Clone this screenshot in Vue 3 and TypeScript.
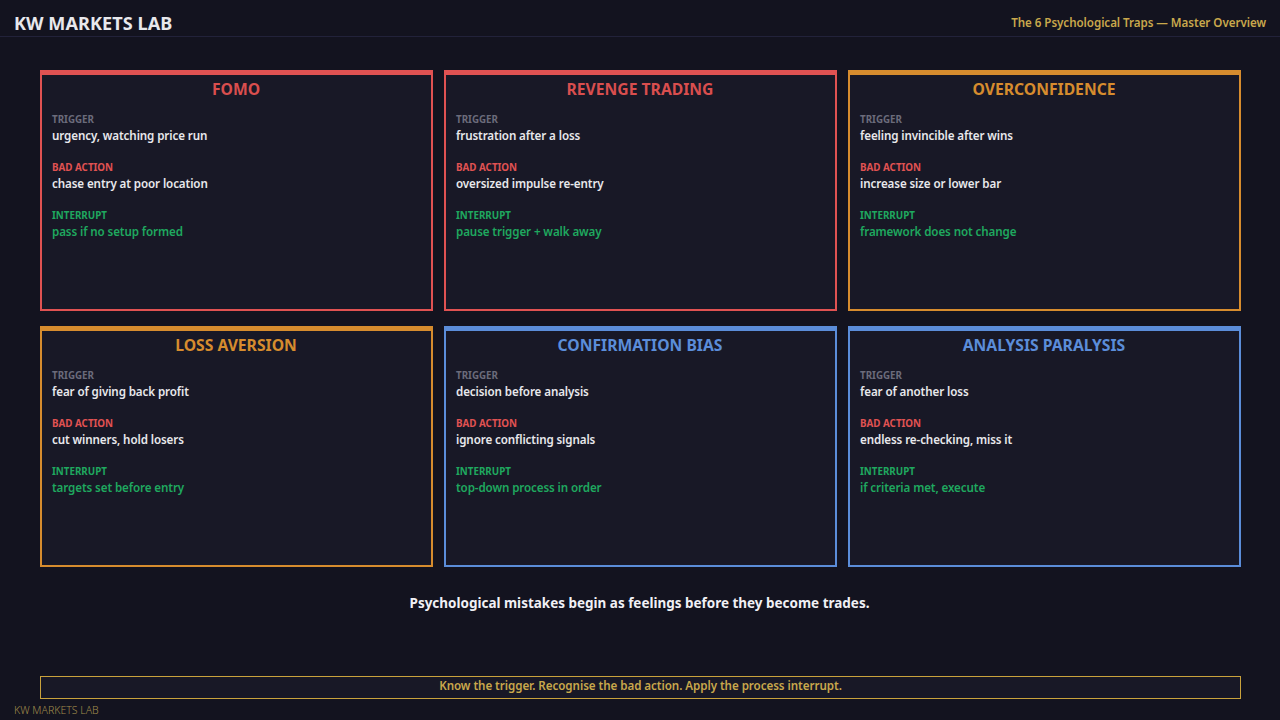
<template>
  <div class="page">
    <header class="top-bar">
      <div class="brand">KW MARKETS LAB</div>
      <div class="subtitle">The 6 Psychological Traps — Master Overview</div>
    </header>

    <main class="content">
      <section class="grid">
        <article v-for="trap in traps" :key="trap.title" class="card" :class="trap.tone">
          <h2 class="card-title">{{ trap.title }}</h2>
          <div class="field">
            <div class="label label-trigger">TRIGGER</div>
            <div class="value">{{ trap.trigger }}</div>
          </div>
          <div class="field">
            <div class="label label-bad">BAD ACTION</div>
            <div class="value">{{ trap.bad }}</div>
          </div>
          <div class="field">
            <div class="label label-interrupt">INTERRUPT</div>
            <div class="value value-interrupt">{{ trap.interrupt }}</div>
          </div>
        </article>
      </section>

      <p class="summary">Psychological mistakes begin as feelings before they become trades.</p>

      <div class="callout">Know the trigger. Recognise the bad action. Apply the process interrupt.</div>
    </main>

    <footer class="footer">KW MARKETS LAB</footer>
  </div>
</template>

<script setup lang="ts">
interface Trap {
  title: string
  tone: 'red' | 'orange' | 'blue'
  trigger: string
  bad: string
  interrupt: string
}

const traps: Trap[] = [
  {
    title: 'FOMO',
    tone: 'red',
    trigger: 'urgency, watching price run',
    bad: 'chase entry at poor location',
    interrupt: 'pass if no setup formed',
  },
  {
    title: 'REVENGE TRADING',
    tone: 'red',
    trigger: 'frustration after a loss',
    bad: 'oversized impulse re-entry',
    interrupt: 'pause trigger + walk away',
  },
  {
    title: 'OVERCONFIDENCE',
    tone: 'orange',
    trigger: 'feeling invincible after wins',
    bad: 'increase size or lower bar',
    interrupt: 'framework does not change',
  },
  {
    title: 'LOSS AVERSION',
    tone: 'orange',
    trigger: 'fear of giving back profit',
    bad: 'cut winners, hold losers',
    interrupt: 'targets set before entry',
  },
  {
    title: 'CONFIRMATION BIAS',
    tone: 'blue',
    trigger: 'decision before analysis',
    bad: 'ignore conflicting signals',
    interrupt: 'top-down process in order',
  },
  {
    title: 'ANALYSIS PARALYSIS',
    tone: 'blue',
    trigger: 'fear of another loss',
    bad: 'endless re-checking, miss it',
    interrupt: 'if criteria met, execute',
  },
]
</script>

<style>
html,
body {
  margin: 0;
  background: #13131f;
}
</style>

<style scoped>
.page {
  width: 1280px;
  height: 720px;
  overflow: hidden;
  display: flex;
  flex-direction: column;
  background: #13131f;
  font-family: 'Noto Sans', 'Open Sans', sans-serif;
  color: #e8e8ec;
}

.top-bar {
  box-sizing: border-box;
  height: 37px;
  padding: 9px 14px 0;
  display: flex;
  align-items: center;
  justify-content: space-between;
  border-bottom: 1px solid #22223a;
  flex-shrink: 0;
}

.brand {
  font-size: 18.1px;
  line-height: 26px;
  font-weight: 700;
  letter-spacing: 0.05px;
}

.subtitle {
  font-size: 11.6px;
  line-height: 24px;
  font-weight: 600;
  letter-spacing: -0.05px;
  color: #c9a84c;
}

.content {
  flex: 1;
  display: flex;
  flex-direction: column;
  padding: 33px 39px 0 40px;
}

.grid {
  display: grid;
  grid-template-columns: repeat(3, 393px);
  grid-auto-rows: 241px;
  column-gap: 11px;
  row-gap: 15px;
}

.card {
  box-sizing: border-box;
  padding: 4px 10px 0;
  background: #181826;
  border: 2px solid;
  border-top-width: 5px;
}

.red {
  border-color: #e05252;
}

.orange {
  border-color: #d68c2e;
}

.blue {
  border-color: #5b8dd9;
}

.card-title {
  margin: 0 0 14px;
  padding-right: 1px;
  font-size: 15.7px;
  line-height: 20px;
  font-weight: 700;
  text-align: center;
}

.red .card-title {
  color: #d94e4e;
}

.orange .card-title {
  color: #d68c2e;
}

.blue .card-title {
  color: #5b8dd9;
}

.field {
  margin-bottom: 17px;
}

.label {
  font-size: 9.8px;
  line-height: 14px;
  font-weight: 700;
}

.label-trigger {
  color: #6b6b7b;
}

.label-bad {
  color: #e05252;
}

.label-interrupt {
  color: #1fa85f;
}

.value {
  font-size: 11.6px;
  line-height: 17px;
  font-weight: 600;
  letter-spacing: -0.1px;
}

.value-interrupt {
  color: #1fa85f;
}

.summary {
  margin: 26px 0 0;
  padding-right: 2px;
  font-size: 13.47px;
  line-height: 20px;
  font-weight: 700;
  text-align: center;
  color: #f0f0f5;
}

.callout {
  box-sizing: border-box;
  height: 23px;
  margin-top: auto;
  margin-bottom: 21px;
  line-height: 18px;
  font-size: 11.6px;
  font-weight: 600;
  letter-spacing: -0.05px;
  text-align: center;
  color: #c9a84c;
  background: #181826;
  border: 1px solid #c9a23c;
}

.footer {
  position: absolute;
  left: 14px;
  top: 703px;
  font-size: 10.5px;
  line-height: 15px;
  font-weight: 300;
  color: #a08c4c;
}
</style>
